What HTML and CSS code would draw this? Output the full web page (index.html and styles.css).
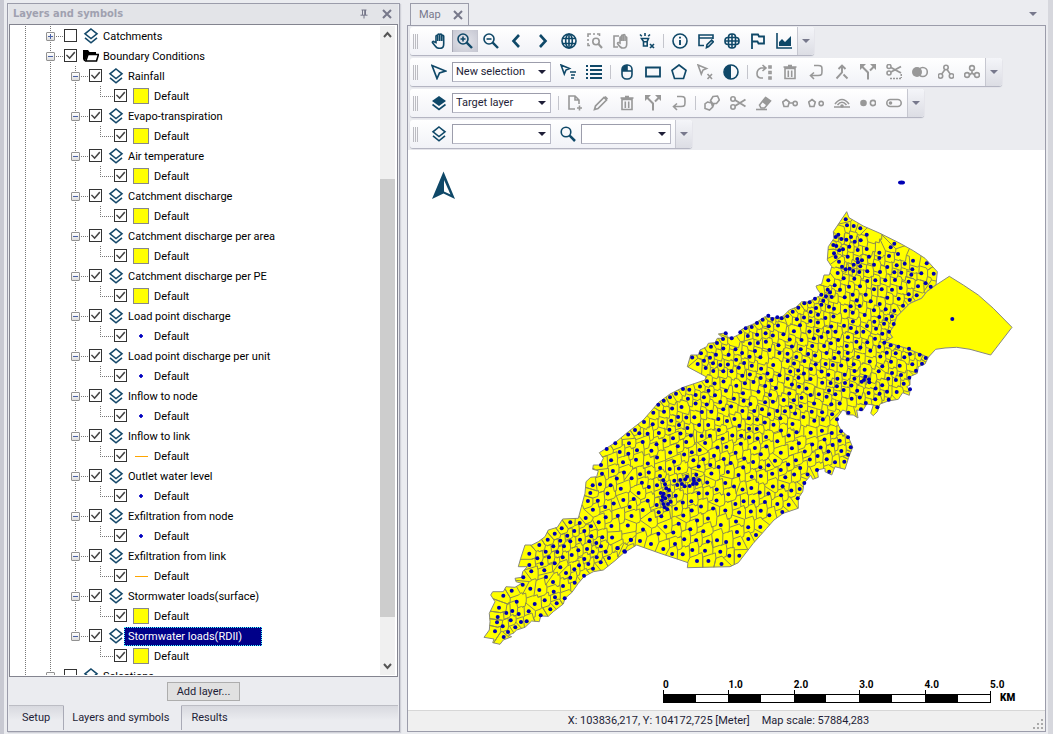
FILE: index.html
```html
<!DOCTYPE html>
<html lang="en">
<head>
<meta charset="utf-8">
<title>Map</title>
<link rel="stylesheet" href="styles.css">
</head>
<body>
<svg class="defs" aria-hidden="true">
  <symbol id="layers" viewBox="0 0 16 16"><path d="M8 1 14 5.8 8 10.6 2 5.8ZM2 9.8l6 5 6-5"/></symbol>
  <symbol id="layers-fill" viewBox="0 0 16 16"><path class="solid" d="M8 1 15 6 8 11 1 6Z"/><path d="M1.500 9.500l6.500 5 6.500-5"/></symbol>
  <symbol id="folder" viewBox="0 0 16 16"><path class="solid" d="M0 2h5l1.500 2H13v2H5L2 13H1L0 11Z"/><path d="M5 6.500h10.500L13.500 13H2.800Z"/></symbol>
  <symbol id="hand" viewBox="0 0 16 16"><path d="M5 9.500V3.200c0-1.200 1.800-1.200 1.800 0V8 2c0-1.300 2-1.300 2 0v6V2c0-1.300 2-1.300 2 0v6V3.200c0-1.200 1.900-1.200 1.900 0V11c0 2.800-1 4.300-3.500 4.300H8c-2 0-2.700-.8-4-2.600L1.600 9.800c-.6-1 .6-1.800 1.500-1.100Z"/></symbol>
  <symbol id="zoomin" viewBox="0 0 16 16"><circle cx="6" cy="6" r="5"/><path d="M9.700 9.700 15 15" stroke-width="2.400"/><path d="M3.500 6h5M6 3.500v5"/></symbol>
  <symbol id="zoomout" viewBox="0 0 16 16"><circle cx="6" cy="6" r="5"/><path d="M9.700 9.700 15 15" stroke-width="2.400"/><path d="M3.500 6h5"/></symbol>
  <symbol id="search" viewBox="0 0 16 16"><circle cx="6" cy="6" r="4.800"/><path d="M9.700 9.700 15 15" stroke-width="2.500"/></symbol>
  <symbol id="prev" viewBox="0 0 16 16"><path d="M10 2 4.500 8 10 14" stroke-width="2.600"/></symbol>
  <symbol id="next" viewBox="0 0 16 16"><path d="m5 2 5.500 6L5 14" stroke-width="2.600"/></symbol>
  <symbol id="globe" viewBox="0 0 16 16"><circle cx="8" cy="8" r="7"/><ellipse cx="8" cy="8" rx="3.300" ry="7"/><path d="M1.500 5.500h13M1.500 10.500h13M8 1v14"/></symbol>
  <symbol id="zoomarea" viewBox="0 0 16 16"><path d="M1 4V1h3M6 1h2M10 1h2.500v2M1 6v2M1 10v2.500h2"/><circle cx="9" cy="8.500" r="3.200"/><path d="m11.500 11 3.500 4" stroke-width="2"/></symbol>
  <symbol id="panarea" viewBox="0 0 16 16"><path d="M6 3H1v11h4"/><path d="M7 10V4.500c0-1 1.500-1 1.500 0V8 3c0-1.200 1.700-1.200 1.700 0v5-5.500c0-1.200 1.800-1.200 1.800 0V8 4.500c0-1 1.700-1 1.700 0V11c0 2.500-1 4-3 4H9.500c-2 0-2.500-1-5-4.500 0-1 1-1.400 2.500-.5Z"/></symbol>
  <symbol id="flash" viewBox="0 0 16 16"><path d="M2.500 5.500h7L8.200 8.500V13H4.500V8.500ZM4 8.800h4.500M6 0v3M1 1.500l1.800 1.800M11 1.500 9.200 3.300M11 11l4 4M15 11l-4 4"/></symbol>
  <symbol id="info" viewBox="0 0 16 16"><circle cx="8" cy="8" r="7"/><path d="M8 7v5M8 3.800v1.700" stroke-width="1.900"/></symbol>
  <symbol id="formedit" viewBox="0 0 16 16"><path d="M6 12.500H1V2h14v4M1 5h14M8.500 14.500l.5-2.800 4.700-4.500 1.600 1.600-4.700 4.700Z"/></symbol>
  <symbol id="mesh" viewBox="0 0 16 16"><rect x="4.500" y="1" width="7" height="14" rx="3"/><rect x="1" y="4.500" width="14" height="7" rx="3"/><path d="M8 1v14M1 8h14"/></symbol>
  <symbol id="flag" viewBox="0 0 16 16"><path d="M2 16V1.500h6l1 2h5v7H8.500l-1-2H2" stroke-width="1.800"/></symbol>
  <symbol id="chart" viewBox="0 0 16 16"><path d="M1 0v15h15"/><path class="solid" d="M3 13V9l3-3 3 3 6-6v10Z"/></symbol>
  <symbol id="cursor" viewBox="0 0 16 16"><path d="M1 1.500 14.500 7 8.500 9 6 14.500Z" stroke-width="1.700"/></symbol>
  <symbol id="cursorlist" viewBox="0 0 16 16"><path d="M1 1 9.500 4.500 6 6 4.300 10ZM10 8h6M11 11h4M11 14h3"/></symbol>
  <symbol id="list" viewBox="0 0 16 16"><path d="M4 2h12M4 6h12M4 10h12M4 14h12M0 2h2M0 6h2M0 10h2M0 14h2" stroke-width="2"/></symbol>
  <symbol id="mouse" viewBox="0 0 16 16"><rect x="3" y="1" width="10" height="14" rx="4.500"/><path d="M3 7h10M8 1v6"/><path class="solid" d="M8 1v6H3V5q1-4 5-4Z"/></symbol>
  <symbol id="rect" viewBox="0 0 16 16"><path d="M1 3.500h14v9H1Z" stroke-width="1.800"/></symbol>
  <symbol id="penta" viewBox="0 0 16 16"><path d="m8 1 7 5.400L12.500 14.500h-9L1 6.400Z" stroke-width="1.700"/></symbol>
  <symbol id="cursorx" viewBox="0 0 16 16"><path d="M1 1 9.500 4.500 6 6 4.300 10ZM10.500 10l4.500 5M15 10l-4.500 5"/></symbol>
  <symbol id="contrast" viewBox="0 0 16 16"><circle cx="8" cy="8" r="7"/><path class="solid" d="M8 1v14a7 7 0 0 1 0-14Z"/></symbol>
  <symbol id="loop" viewBox="0 0 16 16"><path d="M7 14H4.500Q1 13.500 1 9.500T5 4h4M6.500 1 10 4 6.500 7M13 2h2v2h-2ZM13 7.500h2v2h-2ZM13 13h2v2h-2Z"/></symbol>
  <symbol id="trash" viewBox="0 0 16 16"><path d="M3 4.500h10v10H3ZM1.500 3h13M6 1.500h4M6.300 6.500V13M9.700 6.500V13"/></symbol>
  <symbol id="back" viewBox="0 0 16 16"><path d="M6 1.500h4c4 0 4 1 4 5s0 5-4 5H3M6 8.500l-3.500 3L6 15"/></symbol>
  <symbol id="merge" viewBox="0 0 16 16"><path d="M8 2v6.500L2.500 14.500M9.500 10.500l4 4M4.500 5 8 1.500 11.500 5" stroke-width="1.900"/></symbol>
  <symbol id="split" viewBox="0 0 16 16"><path d="M8 15.500V8.500L2 2.500M10 6.500 14 2.500" stroke-width="2"/><path class="solid" d="M0 6V0h6ZM10 0h6v6Z"/></symbol>
  <symbol id="scissors" viewBox="0 0 16 16"><circle cx="3" cy="4" r="2.200"/><circle cx="3" cy="12" r="2.200"/><path d="m5 5 10.500 6.500M5 11l10.500-6.500" stroke-width="2"/></symbol>
  <symbol id="cutarea" viewBox="0 0 16 16"><circle cx="3" cy="2.500" r="2"/><circle cx="3" cy="9" r="2"/><path d="m5 3.500 10 5.500M5 8l10-5.500" stroke-width="1.900"/><path d="M4 14.500h12M15.300 10v4" stroke-dasharray="2 1"/></symbol>
  <symbol id="union" viewBox="0 0 16 16"><circle class="solid" cx="5" cy="8" r="5"/><circle cx="10.800" cy="8" r="4.500"/></symbol>
  <symbol id="node3" viewBox="0 0 16 16"><circle cx="8" cy="3.500" r="2.200"/><circle cx="2.500" cy="12" r="2.200"/><circle cx="13.500" cy="12" r="2.200"/><path d="m7 5.500-3.400 4.700M9 5.500l3.400 4.700"/></symbol>
  <symbol id="node3b" viewBox="0 0 16 16"><circle cx="8" cy="4" r="2.400"/><circle cx="3" cy="11" r="2.400"/><circle cx="13" cy="11" r="2.400"/><path d="M8 6.500V9L5.400 11M8 9l2.600 2"/></symbol>
  <symbol id="fileadd" viewBox="0 0 16 16"><path d="M8 14H2V1h6l4 4v4M8 1v4h4M12.500 10.500v5M10 13h5"/></symbol>
  <symbol id="pencil" viewBox="0 0 16 16"><path d="M1.500 14.500 2.500 11 11 2.500l2.500 2.500L5 13.500ZM12 1.500l2.500 2.500" stroke-width="1.700"/></symbol>
  <symbol id="polys" viewBox="0 0 16 16"><path d="m9 1.500 4.500-.5 1.800 4-2.800 3.500H8.500L6.500 5.500ZM3.500 7l4 1 1.200 4-3.200 3L1 13.500V9ZM6.500 5.500l1.500 3M10 8.500 8.700 12"/></symbol>
  <symbol id="eraser" viewBox="0 0 16 16"><path d="m9.500 2.500 5 3.500-6 7H5L3.500 10Z"/><path class="solid" d="m9.500 2.500 5 3.500-4 4.500-4.700-3.700Z"/><path d="M0 14.500h11"/></symbol>
  <symbol id="polylink" viewBox="0 0 16 16"><path d="m4 4.500 3.300 2.500L6 11.500H2L.7 7ZM7.500 8H11"/><circle cx="13.200" cy="8.500" r="2.100"/></symbol>
  <symbol id="polydot" viewBox="0 0 16 16"><path d="m4 4.500 3.300 2.500L6 11.500H2L.7 7Z"/><circle cx="13.200" cy="8.500" r="2.100"/></symbol>
  <symbol id="arcs" viewBox="0 0 16 16"><path d="M1 9q7-9 14 0M3.500 10q4.500-5.500 9 0M0 12h16"/><circle class="solid" cx="8" cy="11" r="1.800"/></symbol>
  <symbol id="dots" viewBox="0 0 16 16"><circle class="solid" cx="3.500" cy="8" r="3.300"/><circle cx="13" cy="8" r="2.600"/></symbol>
  <symbol id="toggle" viewBox="0 0 16 16"><rect x=".8" y="4.500" width="14.400" height="7" rx="3.500"/><circle class="solid" cx="4.500" cy="8" r="1.800"/></symbol>
</svg>

<div class="window">
  <aside class="dock">
    <header class="dock-head">
      <h1>Layers and symbols</h1>
      <button class="tiny" aria-label="Pin"><svg viewBox="0 0 10 10"><path d="M2.500 1h5M3.500 1v5M6.500 1v5M5.700 1v5M1.500 6.200h7M5 6v3.500"/></svg></button>
      <button class="tiny" aria-label="Close panel"><svg viewBox="0 0 10 10"><path class="x" d="m1 1 8 8M9 1 1 9"/></svg></button>
    </header>
    <div class="tree-box">
      <ul class="tree" id="tree"></ul>
      <div class="scroll" aria-hidden="true">
        <svg viewBox="0 0 15 17"><path d="m4 11 3.500-4 3.500 4"/></svg>
        <i class="before"></i><i class="thumb"></i><i class="after"></i>
        <svg viewBox="0 0 15 17"><path d="m4 6 3.500 4L11 6"/></svg>
      </div>
    </div>
    <div class="actions"><button class="add">Add layer...</button></div>
    <nav class="tabs">
      <button class="tab">Setup</button>
      <button class="tab active">Layers and symbols</button>
      <button class="tab last">Results</button>
    </nav>
  </aside>

  <main class="work">
    <div class="doc-tabs">
      <div class="doc-tab"><span>Map</span><button class="tiny" aria-label="Close map"><svg viewBox="0 0 10 10"><path class="x" d="m1 1 8 8M9 1 1 9"/></svg></button></div>
      <button class="more" aria-label="Open documents"></button>
    </div>
    <section class="doc">
      <div class="bars" id="bars"></div>
      <div class="map">
        <svg class="canvas" id="map" viewBox="408 150 637 560" role="img" aria-label="Catchment map"></svg>
        <div class="scale">
          <div class="ruler"><span>0</span><span>1.0</span><span>2.0</span><span>3.0</span><span>4.0</span></div>
          <div class="end"><span>5.0</span><b>KM</b></div>
        </div>
      </div>
      <footer class="status"><span>X: 103836,217, Y: 104172,725 [Meter]</span><span>Map scale: 57884,283</span>
        <svg class="grip" viewBox="0 0 12 12"><path d="M9 0h2v2H9ZM5 4h2v2H5ZM9 4h2v2H9ZM1 8h2v2H1ZM5 8h2v2H5ZM9 8h2v2H9Z"/></svg>
      </footer>
    </section>
  </main>
</div>
<script src="app.js"></script>
</body>
</html>
```
FILE: styles.css
```css
*, *::before, *::after { box-sizing: border-box; }
body {
  margin: 0;
  background: #ebecf0;
  color: #1e1e37;
  font: 11px/14px Roboto, "Noto Sans", sans-serif;
}
button, select, input { font: inherit; color: inherit; margin: 0; }
button { padding: 0; border: 0; background: none; }
h1, ul { margin: 0; padding: 0; }
.defs { position: absolute; width: 0; height: 0; }
.window {
  display: flex;
  gap: 7px;
  height: 100vh;
  padding: 3px 2px 2px 3px;
  border-left: 4px solid #c8c9d2;
  border-right: 5px solid #d6d7dd;
}

/* Layers panel */
.dock {
  display: flex;
  flex-direction: column;
  flex: 0 0 393px;
  border: 1px solid #9b9caa;
  padding: 0 1px 1px;
  box-shadow: 1px 1px 1px #d0d1d8;
}
.dock-head {
  display: flex;
  align-items: center;
  gap: 13px;
  height: 20px;
  padding: 0 6px 0 4px;
  background: #e3e4e8;
}
.dock-head h1 { flex: 1; font: bold 11px/16px "DejaVu Sans Condensed", "DejaVu Sans", sans-serif; color: #a0a1b0; }
.tiny { display: flex; }
.tiny svg { width: 10px; height: 10px; fill: none; stroke: #77788a; }
.tiny .x { stroke-width: 2; }
.tree-box {
  display: flex;
  flex: 1;
  min-height: 0;
  border: 1px solid #83848f;
  background: #fff;
  padding: 1px;
}
.tree {
  flex: 1;
  overflow: hidden;
  list-style: none;
  padding-left: 2px;
  color: #000;
}
.row { display: flex; align-items: center; height: 20px; }
.guide { position: relative; align-self: stretch; flex: 0 0 25px; }
.guide.line::before, .guide.half::before {
  content: "";
  position: absolute;
  left: 12px;
  top: 0;
  width: 1px;
  height: 100%;
  background: repeating-linear-gradient(#777 0 1px, transparent 1px 2px);
}
.guide.half::before { height: 50%; }
.guide.arm::after {
  content: "";
  position: absolute;
  left: 12px;
  top: 10px;
  width: 14px;
  height: 1px;
  background: repeating-linear-gradient(90deg, #777 0 1px, transparent 1px 2px);
}
.expander {
  position: absolute;
  z-index: 1;
  left: 8px;
  top: 6px;
  width: 9px;
  height: 9px;
  border: 1px solid #919191;
  border-radius: 1px;
  background: linear-gradient(#4b63a7, #4b63a7) center / 5px 1px no-repeat, linear-gradient(#fff, #ddd);
}
.expander.plus {
  background: linear-gradient(#4b63a7, #4b63a7) center / 5px 1px no-repeat, linear-gradient(#4b63a7, #4b63a7) center / 1px 5px no-repeat, linear-gradient(#fff, #ddd);
}
.row label { display: flex; align-items: center; }
.row input {
  appearance: none;
  flex: none;
  width: 13px;
  height: 13px;
  margin: 0 6px 1px 1px;
  border: 1px solid #333;
  background: #fff;
}
.row input:checked::after {
  content: "";
  display: block;
  width: 11px;
  height: 11px;
  background: #444;
  clip-path: polygon(8% 48%, 18% 40%, 42% 64%, 84% 14%, 94% 24%, 42% 84%);
}
.icon {
  width: 16px;
  height: 16px;
  flex: none;
  fill: none;
  stroke: currentColor;
  stroke-width: 1.4;
}
.solid { fill: currentColor; stroke: none; }
.row .icon { color: #15496a; stroke-width: 1.6; }
.row .folder { color: #000; }
.name { padding: 1px 2px 0 3px; border: 1px solid transparent; line-height: 16px; white-space: nowrap; }
.name.selected { width: 138px; background: #000089; color: #fff; border: 1px dotted #4ff; }
.swatch { flex: none; width: 16px; height: 16px; margin-right: 1px; border: 1px solid #888; background: #ff0; }
.swatch.point { border: 0; background: radial-gradient(circle, #0000c0 1.500px, transparent 2px); }
.swatch.stroke { border: 0; background: linear-gradient(#ffa500, #ffa500) center / 13px 1px no-repeat; }
.scroll { display: flex; flex-direction: column; flex: 0 0 15px; margin-right: 1px; background: #f0f0f0; }
.scroll svg { flex: none; width: 15px; height: 17px; fill: none; stroke: #555; stroke-width: 2; }
.scroll .before { flex: 136; }
.scroll .thumb { flex: 437; background: #cdcdcd; }
.scroll .after { flex: 41; }
.actions { display: flex; justify-content: center; padding: 5px 0 4px; }
.add { width: 73px; height: 19px; border: 1px solid #adadad; background: #e1e1e1; line-height: 16px; }
.tabs { display: flex; height: 25px; }
.tab { padding: 0 13px; border-top: 1px solid #bcbdc4; background: linear-gradient(#d8d9df, #ebecf0 60%); }
.tab.active { padding: 0 12px 0 8px; border-top-color: transparent; border-left: 1px solid #a9aab6; border-right: 1px solid #a9aab6; background: none; }
.tab.last { flex: 1; text-align: left; padding: 0 9px; }

/* Document area */
.work { display: flex; flex-direction: column; flex: 1; min-width: 0; }
.doc-tabs { display: flex; justify-content: space-between; height: 22px; padding-left: 3px; }
.doc-tab {
  display: flex;
  align-items: center;
  gap: 12px;
  height: 23px;
  padding: 0 5px 0 8px;
  border: 1px solid #9b9caa;
  border-bottom: 0;
  background: #ebecf0;
  color: #77788c;
}
.more { width: 27px; }
.more::after, .overflow::after {
  content: "";
  display: block;
  width: 8px;
  margin: auto;
  border: solid transparent;
  border-width: 4px 4px 0;
  border-top-color: #77788c;
}
.doc { display: flex; flex-direction: column; flex: 1; min-height: 0; border: 1px solid #9b9caa; }
.bars { display: flex; flex-direction: column; align-items: flex-start; gap: 3px; padding: 1px 2px; }
.bar {
  display: flex;
  align-items: center;
  height: 28px;
  border-radius: 3px;
  background: linear-gradient(#fff, #f1f2f7);
  box-shadow: 0 1px 1px #aeb0bd;
}
.handle {
  width: 16px;
  height: 15px;
  background: repeating-linear-gradient(90deg, #bcbcc2 0 1px, transparent 1px 2px) 3px 0 / 5px 15px no-repeat;
}
.tool { display: flex; align-items: center; justify-content: center; width: 26px; height: 22px; color: #0f4868; }
.tool .icon { stroke-width: 1.6; }
.tool:disabled { color: #989898; }
.tool.on { background: radial-gradient(ellipse, #e3e4ea, #c5c6d1); box-shadow: inset 1px 0 #a6a7b3, inset -1px 0 #c4c5cf; }
.sep { width: 7px; height: 14px; background: linear-gradient(#c4c5cc, #c4c5cc) center / 1px 100% no-repeat; }
.combo { position: relative; display: flex; width: 99px; margin-right: 4px; }
.combo.short { width: 90px; }
.combo select {
  appearance: none;
  width: 100%;
  height: 20px;
  padding: 0 3px;
  border: 1px solid #b9bac7;
  border-top-color: #9c9dab;
  border-left-color: #9c9dab;
  border-radius: 0;
  background: #fff;
}
.combo::after {
  content: "";
  position: absolute;
  right: 5px;
  top: 8px;
  border: solid transparent;
  border-width: 4px 4px 0;
  border-top-color: #1e1e37;
  pointer-events: none;
}
.overflow {
  width: 17px;
  height: 28px;
  border-left: 1px solid #c6c7d0;
  border-radius: 0 3px 3px 0;
  background: linear-gradient(#f4f5f9, #dcdde4);
}
.map { position: relative; flex: 1; min-height: 0; margin-top: 1px; background: #fff; }
.canvas { display: block; width: 100%; height: 100%; }
.scale {
  position: absolute;
  right: 25px;
  bottom: 6px;
  display: flex;
  color: #000;
  font: bold 10px/12px Roboto, sans-serif;
}
.ruler { display: grid; grid-template-columns: repeat(5, 1fr); width: 327px; }
.ruler span { position: relative; height: 25px; }
.ruler span::before { content: ""; position: absolute; left: 0; top: 11px; height: 12px; border-left: 1px solid #000; }
.ruler span::after {
  content: "";
  position: absolute;
  left: 0;
  top: 15px;
  width: 100%;
  height: 9px;
  border: solid #000;
  border-width: 1px 0;
  background: linear-gradient(90deg, #000 50%, #fff 50%);
}
.end { display: grid; grid-template-rows: 12px 12px; width: 30px; }
.end b { padding-left: 9px; border-left: 1px solid #000; line-height: 14px; }
.status {
  position: relative;
  display: flex;
  justify-content: center;
  align-items: center;
  gap: 12px;
  height: 21px;
  padding-right: 16px;
  border-top: 1px solid #d7d7d7;
  background: #f0f0f0;
}
.status .grip { position: absolute; right: 1px; bottom: 0; width: 12px; height: 12px; fill: #aaa; }

/* Map drawing */
.area { fill: #ff0; stroke: #888880; stroke-width: 1; stroke-linejoin: round; }
.cells { fill: none; stroke: #8c8c50; stroke-width: 1; }
.dots { fill: #0000b4; }
.north { fill: #0f4868; }
.north-light { fill: #fff; }
```
FILE: app.js
```js
const icon = (id, extra = '') => `<svg class="icon ${extra}" aria-hidden="true"><use href="#${id}"/></svg>`;

/* Layer tree */
const layers = [
  ['Rainfall', ''], ['Evapo-transpiration', ''], ['Air temperature', ''],
  ['Catchment discharge', ''], ['Catchment discharge per area', ''],
  ['Catchment discharge per PE', ''], ['Load point discharge', 'point'],
  ['Load point discharge per unit', 'point'], ['Inflow to node', 'point'],
  ['Inflow to link', 'stroke'], ['Outlet water level', 'point'],
  ['Exfiltration from node', 'point'], ['Exfiltration from link', 'stroke'],
  ['Stormwater loads(surface)', ''], ['Stormwater loads(RDII)', '']
];
const guide = (cls, inner = '') => `<span class="guide ${cls}">${inner}</span>`;
const row = (guides, checked, mark, text, cls = '') =>
  `<li class="row">${guides}<label><input type="checkbox"${checked ? ' checked' : ''}>${mark}<span class="name ${cls}">${text}</span></label></li>`;
const minus = '<span class="expander"></span>';
const plus = '<span class="expander plus"></span>';
const root = guide('line');
let tree = row(root + guide('line arm', plus), false, icon('layers'), 'Catchments');
tree += row(root + guide('line arm', minus), true, icon('folder', 'folder'), 'Boundary Conditions');
layers.forEach(([name, kind], i) => {
  const last = i === layers.length - 1;
  tree += row(root + guide('line') + guide((last ? 'half' : 'line') + ' arm', minus), true, icon('layers'), name, last ? 'selected' : '');
  tree += row(root + guide('line') + guide(last ? '' : 'line') + guide('half arm'), true, `<span class="swatch ${kind}"></span>`, 'Default');
});
tree += row(root + guide('line arm', minus), false, icon('layers'), 'Selections');
document.getElementById('tree').innerHTML = tree;

/* Toolbars: "|" separator, "-" prefix disabled, "*" prefix pressed, "[...]" combo box */
const bars = [
  'hand *zoomin zoomout prev next globe -zoomarea -panarea flash | info formedit mesh flag chart',
  'cursor [New_selection] cursorlist list | mouse rect penta -cursorx contrast | -loop -trash -back -merge -split -cutarea -union -node3 -node3b',
  'layers-fill [Target_layer] | -fileadd -pencil -trash -split -back | -polys -scissors -eraser -polylink -polydot -arcs -dots -toggle',
  'layers [] search []'
];
document.getElementById('bars').innerHTML = bars.map(line => {
  let combos = 0;
  const items = line.split(' ').map(t => {
    if (t === '|') return '<span class="sep"></span>';
    if (t[0] === '[') {
      combos += 1;
      const text = t.slice(1, -1).replace('_', ' ');
      return `<span class="combo${combos > 1 ? ' short' : ''}"><select aria-label="${text || 'Choose'}"><option>${text}</option></select></span>`;
    }
    const id = t.replace(/^[-*]/, '');
    return `<button class="tool${t[0] === '*' ? ' on' : ''}" aria-label="${id}"${t[0] === '-' ? ' disabled' : ''}>${icon(id)}</button>`;
  }).join('');
  return `<div class="bar"><span class="handle"></span>${items}<button class="overflow" aria-label="More"></button></div>`;
}).join('');

/* Map data: each sheet holds x,y pairs in thirds of a map unit from its origin */
const sheet = (ox, oy, text) => {
  const n = text.trim().split(/[\s,]+/).map(Number);
  const out = [];
  for (let i = 0; i < n.length; i += 2) out.push([ox + n[i] / 3, oy + n[i + 1] / 3]);
  return out;
};
const big = sheet(680, 200, '768,255 808,229 850,255 895,285 940,325 996,382 932,465 870,448 830,442 795,444 767,448 745,472 680,445 615,425 638,412 628,398 640,380 650,350 690,310 725,295 740,275');
const outline = [
  ...sheet(680, 200, '500,35 507,53 550,78 600,100 660,130 700,152 735,175 772,215 768,255 740,275 725,295 690,310 650,350 640,380 628,398 638,412 615,425 680,445 745,472 735,492 715,500 712,520 690,530 690,555 680,560 690,572 688,586 668,578 655,598 625,603 600,612 592,635 580,647 572,640 580,615 560,612 548,632 530,630 534,654 520,645 500,644 498,634 488,630 470,655'),
  ...sheet(580, 370, '775,165 783,180 805,200 818,232 806,262 795,298 765,290 755,315 735,305 735,295 712,300 715,322 698,328 692,316 672,340 668,365 655,385 655,415 610,430 582,450 560,475 520,520 475,578 450,590 322,593 324,578 240,550 170,525 130,550 105,572 70,600 40,605 12,620'),
  ...sheet(470, 440, '325,430 305,458 285,475 280,492 250,515 235,529 212,528 208,545 185,543 165,562 140,570 130,580 115,585 125,590 100,600 90,613 68,608 72,597 42,592 58,570 60,545 58,520 75,485 62,465 68,455 100,455 108,440 135,442 155,430 138,425 135,415 155,412 158,395 172,380 145,380 152,355 165,315 185,315 205,305 225,290 235,270 262,262 278,237 325,235 345,160 348,125 362,112 380,110 385,92 368,88 370,75 390,75 400,55 388,38 435,8'),
  ...sheet(580, 370, '145,185 190,150 235,98 270,72 310,52 375,30'),
  ...sheet(680, 200, '78,530 22,500 32,465 55,465 60,450 80,440 85,430 105,428 112,415 130,415 115,402 140,398 142,412 160,412 180,402 182,390 200,380 220,372 240,360 255,350 290,355 310,348 328,330 348,322 365,305 385,306 410,292 425,285 412,268 408,258 425,252 432,225 448,225 455,200 442,180 445,140 462,115 460,95 480,65')
];
const points = [
  ...sheet(680, 200, '497,58 501,76 521,78 541,85 560,104 475,104 467,111 513,111 484,117 499,119 542,121 524,125 643,131 460,135 469,138 508,140 632,142 489,148 478,151 533,150 560,147 598,158 654,162 462,160 467,171 503,170 567,170 598,174 627,168 477,185 532,177 546,181 699,182 534,187 674,191 740,190 521,194 582,194 650,196 541,199 622,201 486,200 497,208 509,206 697,208 473,219 520,213 538,216 562,214 600,216 643,217 664,218 694,224 724,220 761,221 491,235 523,236 445,241 562,243 586,241 616,241 645,240 686,245 737,250 464,256 507,260 540,259 714,259 752,260 480,269 443,269 582,268 605,268 636,269 662,264 450,277 424,284 518,284 557,284 686,283 710,286 438,289 455,291 405,296 494,292 430,302 530,301 572,304 622,293 656,296 689,300 373,310 389,307 424,314 599,312 669,317 447,320 512,319 539,318 355,323 408,324 462,326 582,331 617,328 643,332 338,335 392,336 496,332 322,349 265,347 277,357 292,352 305,355 248,359 636,349 554,345 598,351 619,357 817,357 641,372 612,371 561,378 588,386 627,395 607,401 585,416 613,428 632,436 655,440 687,446 598,440 719,464 647,460 673,472 690,462 737,474 726,491 633,485 607,499 659,497 697,493 708,512 596,514 636,519 663,525 688,533 625,536 671,551 690,568 621,575 650,576 586,598 626,599 592,622 543,628 137,400 129,417 155,415 181,397 197,385 215,381 231,369 111,429 93,440 63,460 108,464 53,492 72,482 90,473 77,504 99,490 100,513 121,495 130,514 568,547 556,530 545,545 567,538 552,540'),
  ...sheet(580, 370, '80,237 63,285 66,311 38,346 60,343 106,220 147,220 192,156 178,190 165,180 247,157 220,128 235,104 251,92 270,82 288,71 309,57 328,59 213,522 250,537 308,553 351,573 421,545 375,542 337,540 448,557 478,557 477,521 505,507 528,495 541,471 568,436 607,426 626,404 653,385 673,339 659,357 812,232 804,202 783,184 779,212 784,243 804,254 793,275 765,277 740,268 771,148 711,300 285,522 153,510 113,535 135,545 321,320 316,328 306,342 341,326 342,333 339,342 350,341 329,348 314,349 349,314 357,330 301,330 283,332 292,345 267,360 259,355 255,343 250,331 240,318 251,371 242,369 248,380 246,391 256,385 267,377 264,402 254,412 262,418 272,395 287,377 230,405 236,427 244,439 250,402'),
  ...sheet(470, 440, '301,247 329,249 275,265 347,234 313,273 343,273 254,281 363,259 386,247 407,232 364,289 397,292 292,287 233,299 271,302 301,304 330,299 358,304 379,309 393,319 208,315 250,319 282,319 178,341 227,335 262,336 305,345 325,331 351,327 368,335 407,335 442,324 463,334 482,299 202,355 237,352 278,352 343,357 380,352 417,354 392,367 215,371 254,370 178,375 184,394 223,391 271,382 327,376 355,372 313,388 369,386 288,399 342,407 160,412 228,411 301,413 158,434 249,426 314,428 279,438 181,446 208,450 125,452 100,467 251,455 255,472 284,475 140,485 224,481 260,490 87,503 194,492 241,508 127,513 176,514 109,519 146,522 83,531 212,526 122,541 81,547 153,546 170,544 98,559 136,562 75,574 114,576 101,591')
];

/* Fill the interior with evenly spread load points */
let seed = 7;
const rand = () => (seed = (seed * 16807) % 2147483647) / 2147483647;
const inside = (x, y, poly) => {
  let hit = false;
  for (let i = 0, j = poly.length - 1; i < poly.length; j = i++) {
    const [ax, ay] = poly[i], [bx, by] = poly[j];
    if ((ay > y) !== (by > y) && x < (bx - ax) * (y - ay) / (by - ay) + ax) hit = !hit;
  }
  return hit;
};
const interior = (x, y) => inside(x, y, outline) && [[2, 0], [-2, 0], [0, 2], [0, -2]].every(([a, b]) => inside(x + a, y + b, outline));
for (let k = 0; k < 16000; k++) {
  const x = 580 + rand() * 340, y = 270 + rand() * 300;
  if (x > 820 && y < 312 || x < 600 && y > 518) continue;
  const base = x > 790 && y < 420 ? 6.4 : x > 700 && y < 420 ? 7 : y > 510 ? 8.8 : 7.6;
  const gap = base + rand() * 1.2;
  if (interior(x, y) && points.every(([px, py]) => Math.hypot(px - x, py - y) > gap)) points.push([x, y]);
}

const near = (p, reach) => points.filter(q => q !== p && Math.abs(q[0] - p[0]) < reach && Math.abs(q[1] - p[1]) < reach);
const seen = new Set();
let cells = '';
const f = v => v.toFixed(1);
for (const p of points) {
  const r = 40;
  let poly = [[-r, -r], [r, -r], [r, r], [-r, r]].map(([a, b]) => [p[0] + a, p[1] + b]);
  for (const q of near(p, 80)) {
    const mx = (p[0] + q[0]) / 2, my = (p[1] + q[1]) / 2, dx = q[0] - p[0], dy = q[1] - p[1];
    const side = v => (v[0] - mx) * dx + (v[1] - my) * dy;
    const next = [];
    poly.forEach((a, i) => {
      const b = poly[(i + 1) % poly.length], sa = side(a), sb = side(b);
      if (sa <= 0) next.push(a);
      if (sa * sb < 0) next.push([a[0] + (b[0] - a[0]) * sa / (sa - sb), a[1] + (b[1] - a[1]) * sa / (sa - sb)]);
    });
    poly = next;
  }
  poly.forEach((v, i) => {
    let a = v, b = poly[(i + 1) % poly.length];
    if (a[0] > b[0]) [a, b] = [b, a];
    const key = f(a[0]) + f(a[1]) + f(b[0]) + f(b[1]);
    if (seen.has(key)) return;
    seen.add(key);
    const w = b[0] - a[0], slope = p[1] < 430 ? 0.25 : -0.3;
    const long = Math.hypot(w, b[1] - a[1]) > 12;
    cells += long
      ? `M${f(a[0])} ${f(a[1])}L${f(b[0])} ${f(b[1])}`
      : `M${f(a[0])} ${f(a[1])}L${f(a[0] + w * 0.85)} ${f(a[1] + w * slope)}L${f(b[0])} ${f(b[1])}`;
  });
}
const poly = pts => pts.map(([x, y]) => f(x) + ',' + f(y)).join(' ');
const dots = points.map(([x, y]) => `<circle cx="${f(x)}" cy="${f(y)}" r="2"/>`).join('');
document.getElementById('map').innerHTML = `
  <clipPath id="edge"><polygon points="${poly(outline)}"/></clipPath>
  <polygon class="area" points="${poly(outline)}"/>
  <path class="cells" clip-path="url(#edge)" d="${cells}"/>
  <polygon class="area" points="${poly(big)}"/>
  <g class="dots">${dots}<ellipse cx="901.500" cy="182.500" rx="3.500" ry="2"/></g>
  <path class="north" d="M443.500 171.500 455 199 443.500 193.500 432 199Z"/>
  <path class="north-light" d="M444 180 450.500 194.500 444 191.500Z"/>`;
```
